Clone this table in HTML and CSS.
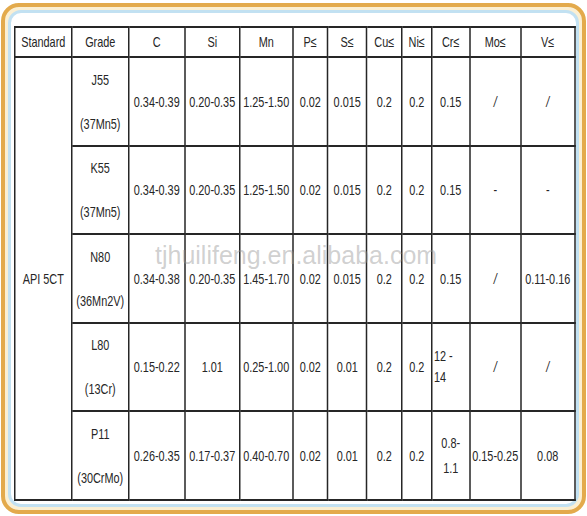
FILE: index.html
```html
<!DOCTYPE html>
<html>
<head>
<meta charset="utf-8">
<link rel="stylesheet" href="styles.css">
</head>
<body>
<div class="frame">
  <div class="inner">
    <table class="spec">
      <colgroup>
        <col class="w57"><col class="w57"><col class="w56"><col class="w55"><col class="w53"><col class="w35">
        <col class="w39"><col class="w35"><col class="w30"><col class="w38"><col class="w51"><col class="w54">
      </colgroup>
      <tr class="head">
        <td>Standard</td><td>Grade</td><td>C</td><td>Si</td><td>Mn</td><td>P≤</td><td>S≤</td><td>Cu≤</td><td>Ni≤</td><td>Cr≤</td><td>Mo≤</td><td>V≤</td>
      </tr>
      <tr class="r89">
        <td rowspan="5">API 5CT</td>
        <td class="grade">J55<br><br>(37Mn5)</td>
        <td>0.34-0.39</td><td>0.20-0.35</td><td>1.25-1.50</td><td>0.02</td><td>0.015</td><td>0.2</td><td>0.2</td><td>0.15</td><td class="slash">/</td><td class="slash">/</td>
      </tr>
      <tr class="r88">
        <td class="grade">K55<br><br>(37Mn5)</td>
        <td>0.34-0.39</td><td>0.20-0.35</td><td>1.25-1.50</td><td>0.02</td><td>0.015</td><td>0.2</td><td>0.2</td><td>0.15</td><td>-</td><td>-</td>
      </tr>
      <tr class="r89">
        <td class="grade">N80<br><br>(36Mn2V)</td>
        <td>0.34-0.38</td><td>0.20-0.35</td><td>1.45-1.70</td><td>0.02</td><td>0.015</td><td>0.2</td><td>0.2</td><td>0.15</td><td class="slash">/</td><td>0.11-0.16</td>
      </tr>
      <tr class="r88">
        <td class="grade">L80<br><br>(13Cr)</td>
        <td>0.15-0.22</td><td>1.01</td><td>0.25-1.00</td><td>0.02</td><td>0.01</td><td>0.2</td><td>0.2</td><td class="left">12 -<br>14</td><td class="slash">/</td><td class="slash">/</td>
      </tr>
      <tr class="r89">
        <td class="grade">P11<br><br>(30CrMo)</td>
        <td>0.26-0.35</td><td>0.17-0.37</td><td>0.40-0.70</td><td>0.02</td><td>0.01</td><td>0.2</td><td>0.2</td><td class="tall">0.8-<br>1.1</td><td>0.15-0.25</td><td>0.08</td>
      </tr>
    </table>
    <div class="watermark">tjhuilifeng.en.alibaba.com</div>
  </div>
</div>
</body>
</html>
```

FILE: styles.css
```css
html, body {
  margin: 0;
  padding: 0;
  background: #ffffff;
}
body {
  width: 587px;
  height: 516px;
  overflow: hidden;
}
.frame {
  box-sizing: border-box;
  margin: 3px 1px 2px 1px;
  height: 511px;
  border: 4px solid #e3aa4c;
  border-radius: 18px;
  padding: 3px;
  background: #fbefd2;
}
.inner {
  position: relative;
  box-sizing: border-box;
  height: 100%;
  border: 3px solid #c2e1f2;
  border-radius: 13px;
  background: #ffffff;
  padding: 13px 2px 3px 3px;
}
/* The table is laid out wider and squeezed horizontally to get a
   narrow (Arial Narrow-like) face from Liberation Sans. */
.spec {
  table-layout: fixed;
  width: 746.67px;
  border-collapse: collapse;
  transform: scaleX(0.75);
  transform-origin: 0 0;
  font-family: "Liberation Sans", Arial, sans-serif;
  font-size: 14.5px;
  color: #262626;
}
.spec td {
  border: 2px solid #262626;
  text-align: center;
  vertical-align: middle;
  padding: 0 1px;
  line-height: 22px;
  white-space: nowrap;
  overflow: visible;
}
.w57 { width: 76px; }
.w56 { width: 74.67px; }
.w55 { width: 73.33px; }
.w53 { width: 70.67px; }
.w35 { width: 46.67px; }
.w39 { width: 52px; }
.w30 { width: 40px; }
.w38 { width: 50.67px; }
.w51 { width: 68px; }
.w54 { width: 72px; }
.head { height: 30px; }
.r89 { height: 89px; }
.r88 { height: 88px; }
.spec td.left {
  text-align: left;
  padding-left: 2px;
  line-height: 21px;
}
.spec td.tall { line-height: 25px; }
.slash { font-style: italic; }
.watermark {
  position: absolute;
  left: 144px;
  top: 230px;
  font-family: "Liberation Sans", Arial, sans-serif;
  font-size: 25px;
  line-height: 25px;
  color: rgba(150, 150, 150, 0.45);
  white-space: nowrap;
  pointer-events: none;
}
```
